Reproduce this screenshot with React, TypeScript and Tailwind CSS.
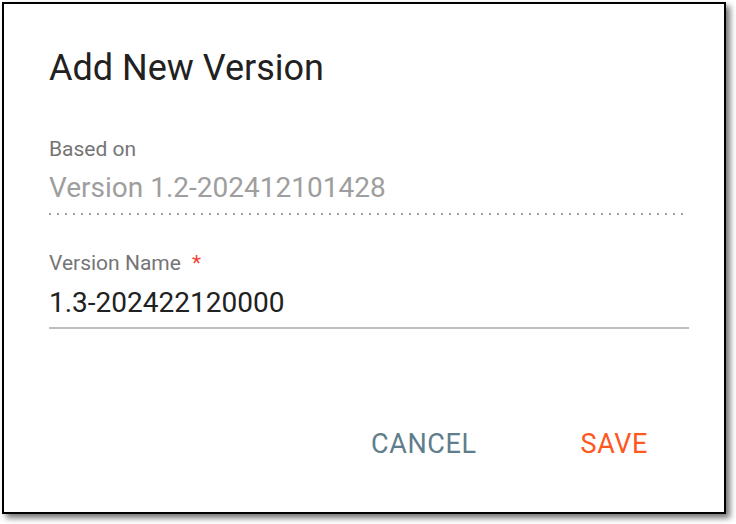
import React from "react";

export default function App() {
  return (
    <div className="w-[736px] h-[524px] bg-white pl-[2px] pt-[2px]" style={{ fontFamily: "Roboto, 'Noto Sans', Arial, sans-serif" }}>
      <div className="w-[724px] h-[512px] border-2 border-black bg-white shadow-[4px_4px_6px_rgba(0,0,0,0.55)] flex flex-col pl-[45px] pt-[46px]">
        <h1 className="text-[36px] leading-[36px] font-normal text-[#212121]">Add New Version</h1>

        <div className="mt-[53px] text-[21px] leading-[21px] text-[#757575]">Based on</div>
        <div className="mt-[14px] text-[28px] leading-[28px] text-[#9e9e9e]">Version 1.2-202412101428</div>
        <div className="mt-[11px] w-[636px] h-[2px] bg-[repeating-linear-gradient(to_right,#9e9e9e_0px,#9e9e9e_2px,transparent_2px,transparent_8px)]" />

        <div className="mt-[38px] text-[21px] leading-[21px] text-[#757575]">
          Version Name <span className="ml-[6px] text-[#f44336]">*</span>
        </div>
        <div className="mt-[15px] text-[28px] leading-[28px] text-[#212121]">1.3-202422120000</div>
        <div className="mt-[10px] w-[640px] h-[2px] bg-[#bdbdbd]" />

        <div className="mt-[102px] flex justify-end pr-[76px] gap-[104px] text-[27px] leading-[27px] tracking-[0.6px]">
          <span className="text-[#607d8b]">CANCEL</span>
          <span className="text-[#ff5722]">SAVE</span>
        </div>
      </div>
    </div>
  );
}
